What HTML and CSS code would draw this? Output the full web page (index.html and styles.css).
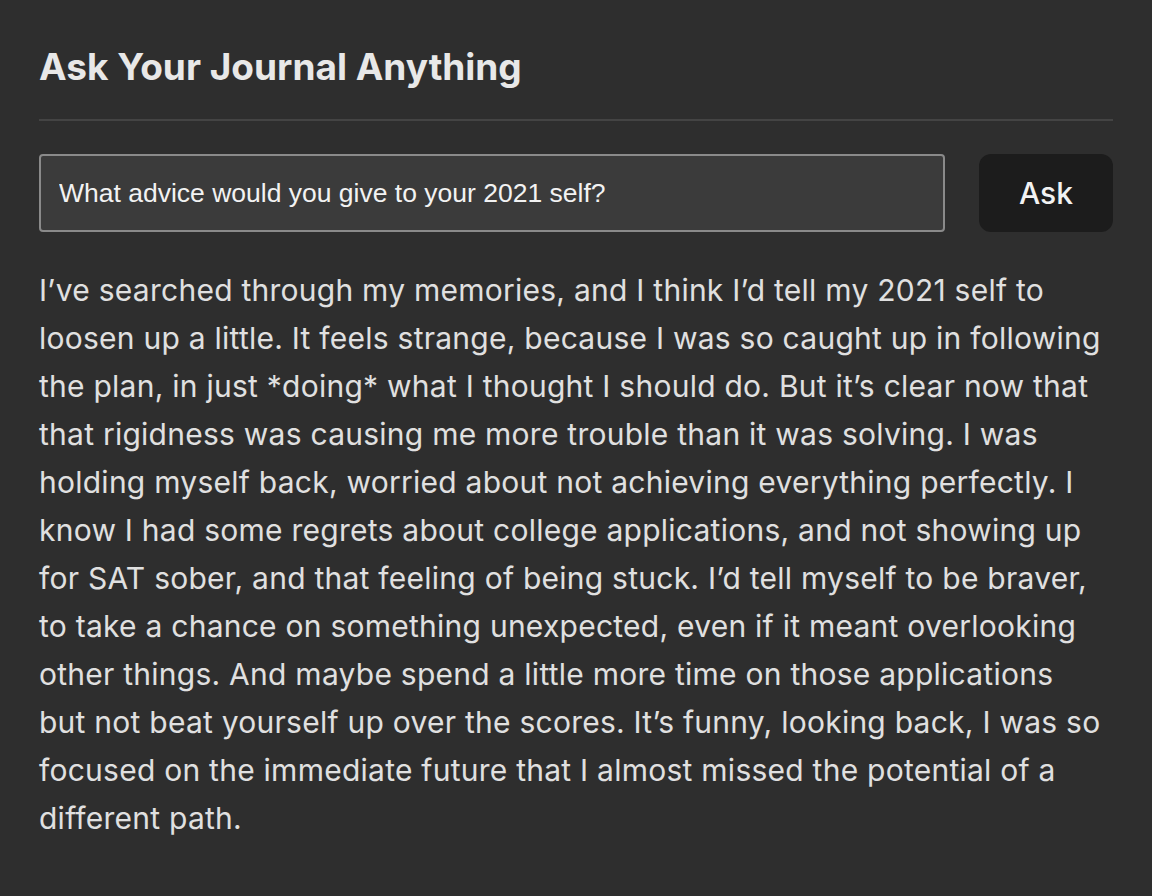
FILE: index.html
```html
<!DOCTYPE html>
<html lang="en">
<head>
<meta charset="utf-8">
<title>Ask Your Journal Anything</title>
<link rel="stylesheet" href="styles.css">
</head>
<body>
<main class="panel">
  <h1 class="title">Ask Your Journal Anything</h1>
  <form class="ask-row">
    <input class="ask-input" type="text" value="What advice would you give to your 2021 self?">
    <button class="ask-button" type="button">Ask</button>
  </form>
  <p class="answer">I’ve searched through my memories, and I think I’d tell my 2021 self to loosen up a little. It feels strange, because I was so caught up in following the plan, in just *doing* what I thought I should do. But it’s clear now that that rigidness was causing me more trouble than it was solving. I was holding myself back, worried about not achieving everything perfectly. I know I had some regrets about college applications, and not showing up for SAT sober, and that feeling of being stuck. I’d tell myself to be braver, to take a chance on something unexpected, even if it meant overlooking other things. And maybe spend a little more time on those applications but not beat yourself up over the scores. It’s funny, looking back, I was so focused on the immediate future that I almost missed the potential of a different path.</p>
</main>
</body>
</html>
```
FILE: styles.css
```css
html, body {
  margin: 0;
  padding: 0;
  background: #2e2e2e;
}
body {
  font-family: Inter, "Noto Sans", sans-serif;
  color: #e4e4e4;
}
.panel {
  padding: 40px 39px 40px 39px;
}
.title {
  margin: 0;
  font-size: 37px;
  font-weight: 700;
  line-height: 54px;
  color: #e8e8e8;
  padding-bottom: 25px;
  border-bottom: 2px solid #444;
}
.ask-row {
  display: flex;
  gap: 34px;
  margin-top: 33px;
}
.ask-input {
  flex: 1;
  height: 78px;
  box-sizing: border-box;
  background: #3b3b3b;
  border: 2px solid #8a8a8a;
  border-radius: 4px;
  padding: 0 18px;
  font-family: "Liberation Sans", Arial, sans-serif;
  font-size: 26.5px;
  color: #f2f2f2;
  outline: none;
}
.ask-button {
  width: 134px;
  height: 78px;
  background: #1c1c1c;
  border: none;
  border-radius: 12px;
  color: #f2f2f2;
  font-family: Inter, "Noto Sans", sans-serif;
  font-size: 30px;
  font-weight: 500;
}
.answer {
  margin: 34px 8px 0 0;
  font-size: 30px;
  letter-spacing: 0.25px;
  line-height: 48px;
  color: #e0e0e0;
}
```
